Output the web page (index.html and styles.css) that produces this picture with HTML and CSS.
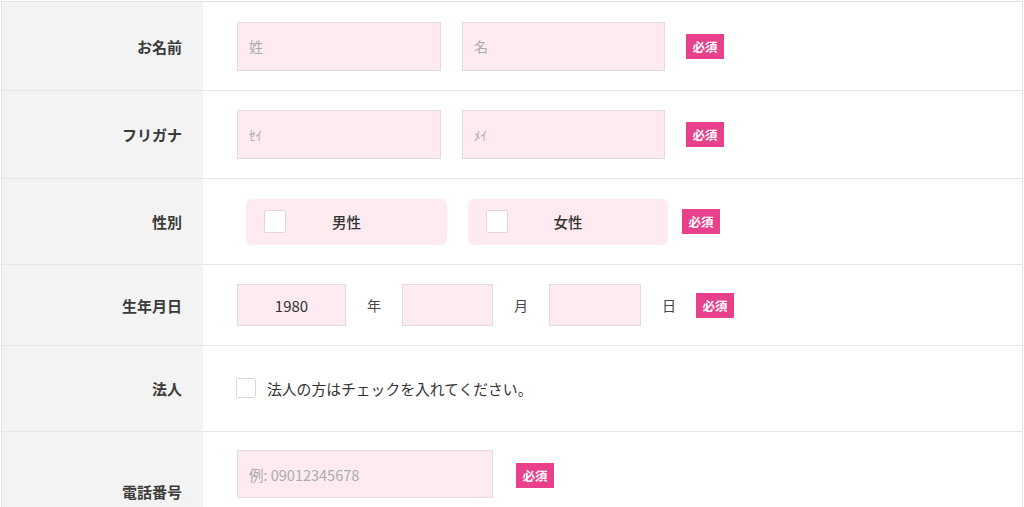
FILE: index.html
```html
<!DOCTYPE html>
<html lang="ja">
<head>
<meta charset="utf-8">
<title>フォーム</title>
<link rel="stylesheet" href="styles.css">
</head>
<body>
<div class="form">
  <div class="row row-1">
    <div class="label">お名前</div>
    <div class="field">
      <div class="input w204">姓</div>
      <div class="input w203 gap">名</div>
      <span class="badge gap">必須</span>
    </div>
  </div>
  <div class="row row-2">
    <div class="label">フリガナ</div>
    <div class="field">
      <div class="input w204 kana">ｾｲ</div>
      <div class="input w203 gap kana">ﾒｲ</div>
      <span class="badge gap">必須</span>
    </div>
  </div>
  <div class="row row-3">
    <div class="label">性別</div>
    <div class="field">
      <div class="gender first"><span class="box"></span><span class="gtext">男性</span></div>
      <div class="gender second"><span class="box"></span><span class="gtext">女性</span></div>
      <span class="badge gap-s">必須</span>
    </div>
  </div>
  <div class="row row-4">
    <div class="label">生年月日</div>
    <div class="field">
      <div class="input short year">1980</div>
      <span class="unit">年</span>
      <div class="input short month"></div>
      <span class="unit">月</span>
      <div class="input short day"></div>
      <span class="unit unit-last">日</span>
      <span class="badge">必須</span>
    </div>
  </div>
  <div class="row row-5">
    <div class="label">法人</div>
    <div class="field">
      <span class="check"></span>
      <span class="note">法人の方はチェックを入れてください。</span>
    </div>
  </div>
  <div class="row row-6">
    <div class="label">電話番号</div>
    <div class="field top">
      <div class="input tel">例: 09012345678</div>
      <span class="badge gap-t">必須</span>
    </div>
  </div>
</div>
</body>
</html>
```

FILE: styles.css
```css
html, body {
  margin: 0;
  padding: 0;
  background: #ffffff;
}
body {
  font-family: "Noto Sans CJK JP", "Noto Sans", sans-serif;
  color: #333333;
  overflow: hidden;
}
.form {
  margin: 1px 1px 0 1px;
  border: 1px solid #e3e3e3;
  border-bottom: none;
}
.row {
  display: grid;
  grid-template-columns: 201px 1fr;
  border-bottom: 1px solid #e6e6e6;
}
.row-1 { height: 88px; }
.row-2 { height: 87px; }
.row-3 { height: 85px; }
.row-4 { height: 80px; }
.row-5 { height: 85px; }
.row-6 { height: 118px; }
.label {
  background: #f3f3f3;
  display: flex;
  align-items: center;
  justify-content: flex-end;
  padding-right: 21px;
  font-size: 15px;
  font-weight: 700;
  color: #3a3a3a;
}
.field {
  display: flex;
  align-items: center;
  padding-left: 34px;
}
.field.top {
  align-items: flex-start;
  padding-top: 18px;
}
.input {
  box-sizing: border-box;
  height: 49px;
  background: #fdebf1;
  border: 1px solid #e6d9de;
  display: flex;
  align-items: center;
  padding-left: 11px;
  font-size: 14px;
  color: #ababab;
}
.input.kana {
  font-size: 13px;
}
.w204 { width: 204px; }
.w203 { width: 203px; }
.gap { margin-left: 21px; }
.gap-s { margin-left: 14px; }
.gap-t { margin-left: 23px; margin-top: 13px; }
.badge {
  display: inline-flex;
  align-items: center;
  justify-content: center;
  width: 38px;
  height: 25px;
  background: #e8408b;
  color: #ffffff;
  font-size: 12.5px;
  font-weight: 700;
}
.gender {
  box-sizing: border-box;
  height: 46px;
  background: #fdebf1;
  border-radius: 6px;
  display: flex;
  align-items: center;
  padding: 0 40px 0 18px;
}
.gender.first {
  width: 201px;
  margin-left: 9px;
}
.gender.second {
  width: 200px;
  margin-left: 21px;
}
.box {
  box-sizing: border-box;
  width: 22px;
  height: 23px;
  background: #ffffff;
  border: 1px solid #e2d6da;
  border-radius: 2px;
}
.gtext {
  flex: 1;
  text-align: center;
  font-size: 14.5px;
  color: #333333;
  font-weight: 500;
}
.input.short {
  height: 42px;
  justify-content: center;
  padding-left: 0;
  color: #333333;
  font-size: 15px;
}
.year { width: 109px; }
.month { width: 91px; }
.day { width: 92px; }
.unit {
  margin: 0 21px;
  font-size: 14px;
  color: #444444;
}
.unit-last {
  margin-right: 20px;
}
.check {
  box-sizing: border-box;
  width: 20px;
  height: 20px;
  margin-left: -1px;
  margin-top: -2px;
  background: #ffffff;
  border: 1px solid #dadada;
  border-radius: 2px;
}
.note {
  margin-left: 11px;
  font-size: 14.8px;
  color: #333333;
}
.input.tel {
  width: 256px;
  height: 48px;
  font-size: 14.5px;
}
```
